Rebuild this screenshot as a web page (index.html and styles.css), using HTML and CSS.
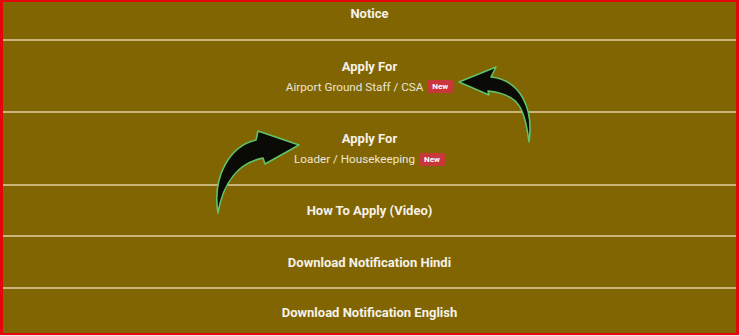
FILE: index.html
```html
<!DOCTYPE html>
<html lang="en">
<head>
  <meta charset="UTF-8">
  <meta name="viewport" content="width=device-width, initial-scale=1.0">
  <title>Important Links</title>
  <link rel="stylesheet" href="styles.css">
</head>
<body>

  <div class="links">
    <div class="row row-top"><span class="title">Notice</span></div>
    <div class="row row-tall">
      <span class="title">Apply For</span>
      <span class="sub">Airport Ground Staff / CSA <span class="badge">New</span></span>
    </div>
    <div class="row row-tall row-tall2">
      <span class="title">Apply For</span>
      <span class="sub">Loader / Housekeeping <span class="badge">New</span></span>
    </div>
    <div class="row"><span class="title">How To Apply (Video)</span></div>
    <div class="row row-wide"><span class="title">Download Notification Hindi</span></div>
    <div class="row row-last"><span class="title">Download Notification English</span></div>

    <svg class="arrows" width="740" height="336" viewBox="0 0 740 336">
      <!-- curved arrow pointing at Airport Ground Staff -->
      <path class="arrow" d="M459 82 L496 67 L491 77 C520 80 534 108 529 142 C525 110 520 94 488 91 L489 95 Z"/>
      <!-- curved arrow pointing at Loader -->
      <path class="arrow" d="M299 145 L258 131 L256 140 C230 146 212 176 218 213 C223 183 238 163 263 158 L265 164 Z"/>
    </svg>
  </div>

</body>
</html>
```

FILE: styles.css
```css
body {
  margin: 0;
  background: #f7e4e4;
  font-family: Roboto, "Liberation Sans", Arial, sans-serif;
}
.links {
  position: relative;
  width: 739px;
  height: 335px;
  box-sizing: border-box;
  border: 2px solid #e5050c;
  border-left-width: 3px;
  border-right-width: 3px;
  background: #806502;
  overflow: hidden;
}
.row {
  display: flex;
  flex-direction: column;
  align-items: center;
  justify-content: center;
  box-sizing: border-box;
  height: 51px;
  border-bottom: 2px solid #cbb47a;
}
.row-top {
  height: 39px;
  justify-content: flex-start;
  padding-top: 4px;
}
.row-tall {
  height: 72px;
  gap: 6px;
}
.row-tall2 {
  height: 73px;
}
.row-wide {
  height: 52px;
}
.row-last {
  height: 46px;
  border-bottom: none;
}
.title {
  color: #f6f1e6;
  font-size: 13px;
  font-weight: bold;
}
.sub {
  color: #ece5d6;
  font-size: 11.7px;
  display: flex;
  align-items: center;
  gap: 4px;
}
.badge {
  background: #c9373a;
  color: #fff;
  font-size: 8px;
  font-weight: bold;
  padding: 2px 5px;
  border-radius: 2px;
}
.arrows {
  position: absolute;
  left: -3px;
  top: -2px;
  pointer-events: none;
}
.arrow {
  fill: #0a0a06;
  stroke: #5fc46a;
  stroke-width: 1.6;
  stroke-linejoin: round;
}
```
